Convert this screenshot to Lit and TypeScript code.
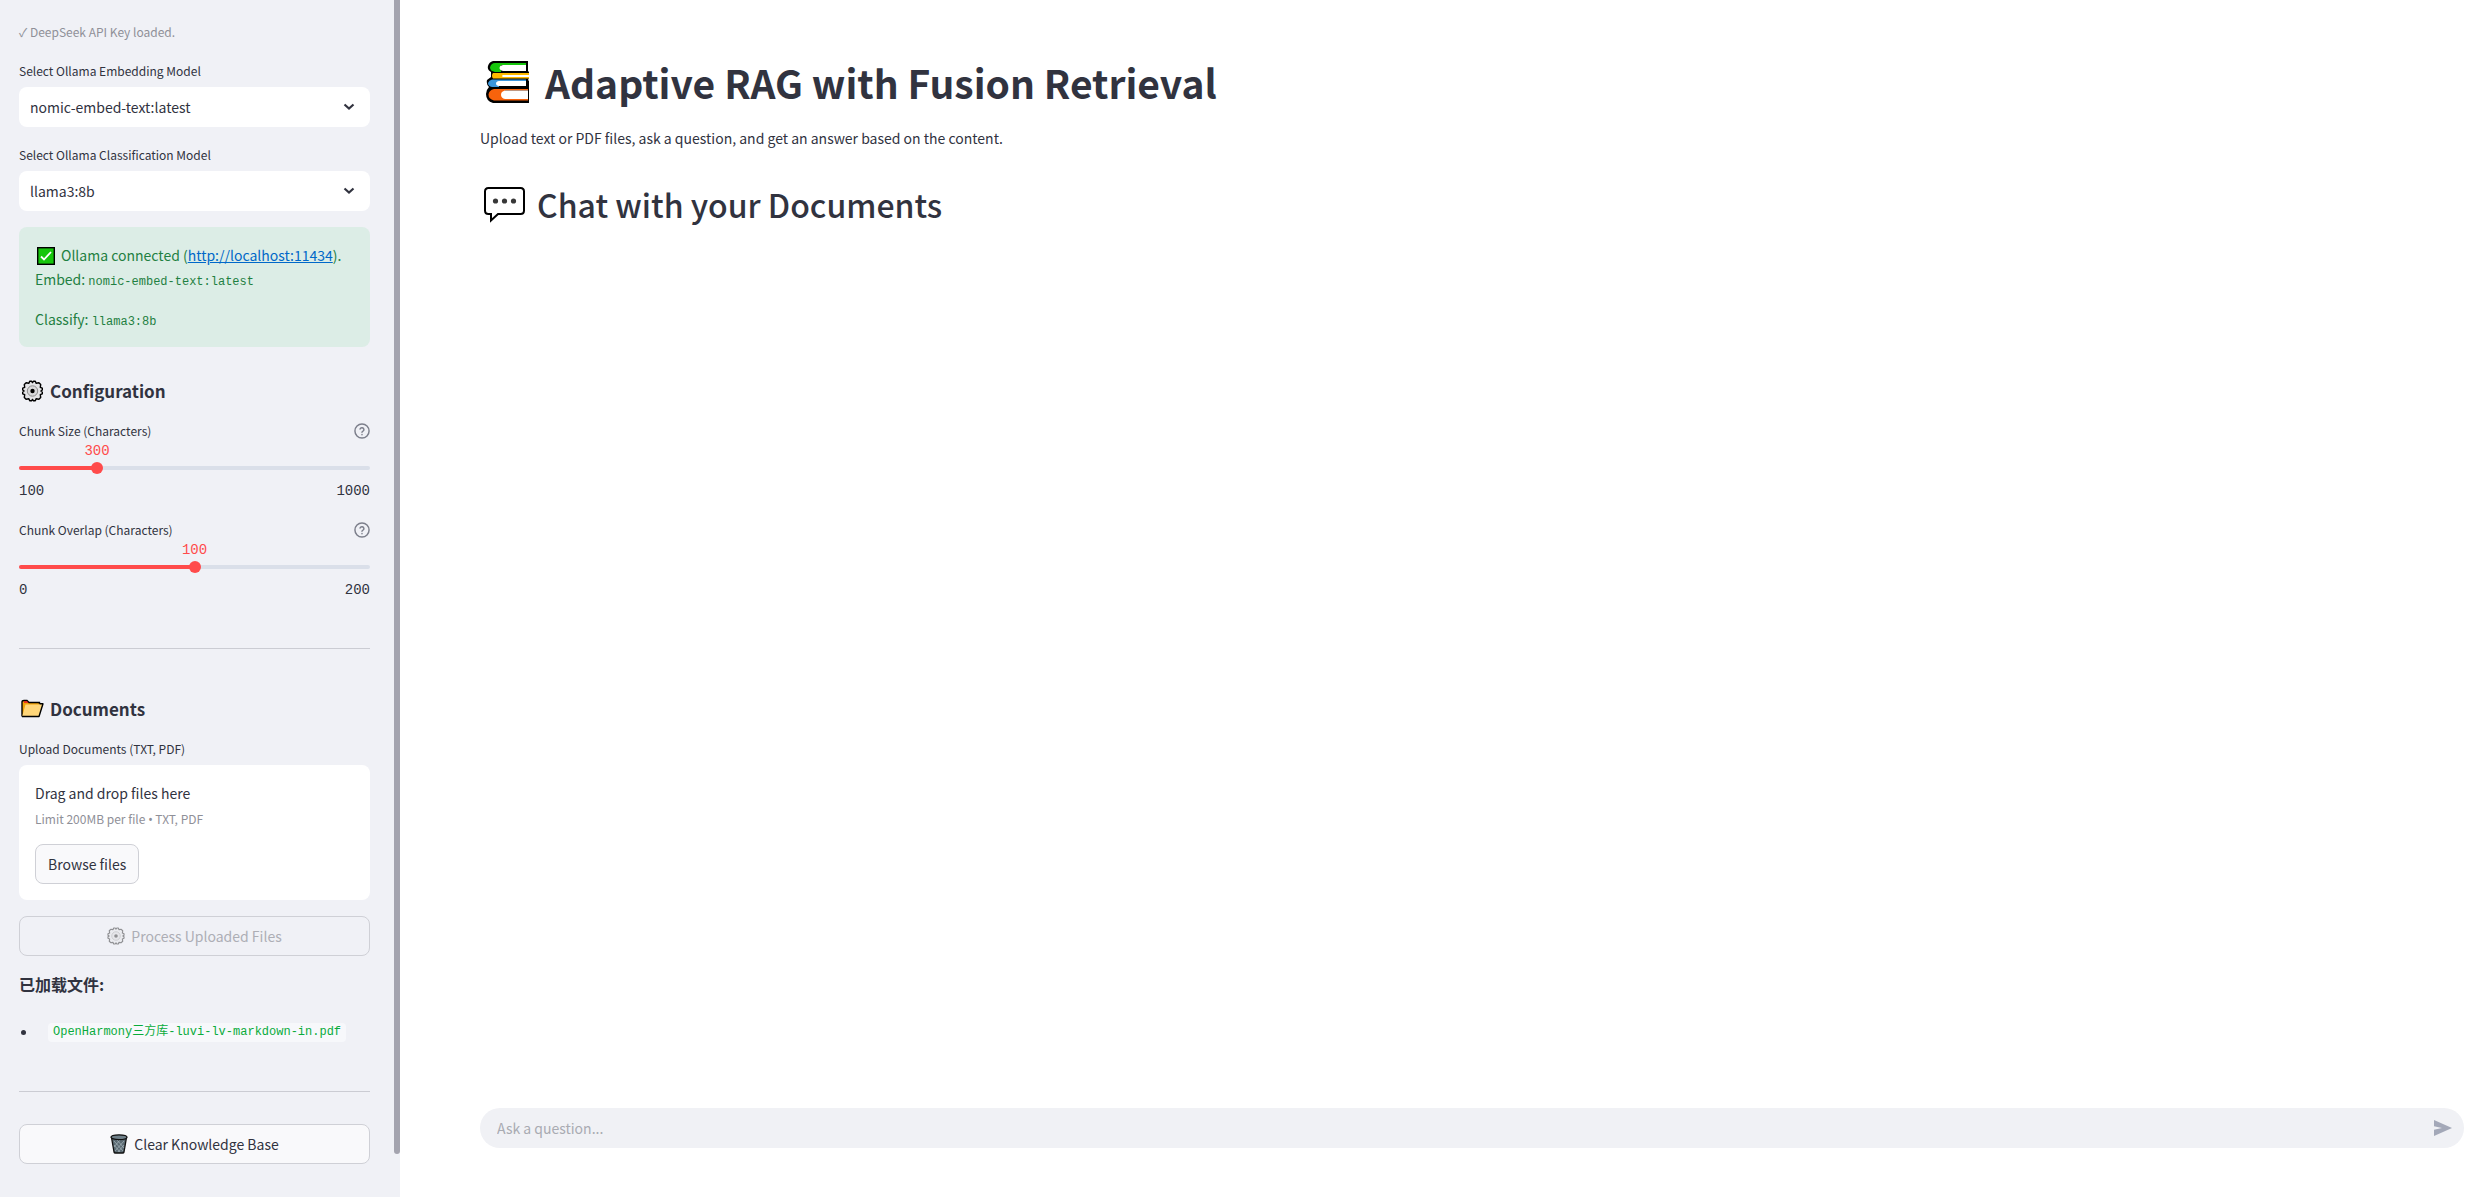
import { LitElement, html, css, svg } from "lit";
import { customElement, property, state } from "lit/decorators.js";

const gear = svg`
  <svg class="gear" viewBox="0 0 22 22" aria-hidden="true">
    <path d="M8.2 1.2 L10 1.2 L11 2.6 L12 1.2 L13.8 1.2 L14.6 3.2 L17.4 2.8 L19.2 4.6 L18.8 7.4 L20.8 8.2 L20.8 10 L19.4 11 L20.8 12 L20.8 13.8 L18.8 14.6 L19.2 17.4 L17.4 19.2 L14.6 18.8 L13.8 20.8 L12 20.8 L11 19.4 L10 20.8 L8.2 20.8 L7.4 18.8 L4.6 19.2 L2.8 17.4 L3.2 14.6 L1.2 13.8 L1.2 12 L2.6 11 L1.2 10 L1.2 8.2 L3.2 7.4 L2.8 4.6 L4.6 2.8 L7.4 3.2 Z"
      fill="#e3e3e6" stroke="#000" stroke-width="1.4" stroke-linejoin="round"/>
    <circle cx="11" cy="11" r="5.2" fill="#d8d8da" stroke="#8d8d8d" stroke-width="1"/>
    <circle cx="11" cy="11" r="2.2" fill="#000"/>
  </svg>`;

@customElement("value-slider")
export class ValueSlider extends LitElement {
  @property() label = "";
  @property({ type: Number }) min = 0;
  @property({ type: Number }) max = 100;
  @property({ type: Number }) value = 0;

  static styles = css`
    :host { display: block; }
    .head { display: flex; align-items: center; justify-content: space-between; height: 24px; }
    label { font-size: 12px; line-height: 24px; }
    .help { border: 0; padding: 0; background: none; width: 16px; height: 16px; color: #7c7f8b; }
    .help svg { display: block; width: 16px; height: 16px; }
    .bubble-row { display: flex; height: 19px; line-height: 17px; }
    .bubble { width: 0; display: flex; justify-content: center; color: #ff4b4b; }
    .bubble-row, .ticks { font-family: "Liberation Mono", monospace; font-size: 14px; }
    .rail { display: grid; align-items: center; height: 12px; }
    .rail > * { grid-area: 1 / 1; }
    .track { height: 4px; border-radius: 2px; background: #dadfe9; overflow: hidden; }
    .fill { height: 4px; background: #ff4b4b; }
    input { appearance: none; background: transparent; margin: 0 -6px; height: 12px; padding: 0; }
    input::-webkit-slider-thumb { appearance: none; width: 12px; height: 12px; border-radius: 50%; background: #ff4b4b; }
    .ticks { display: flex; justify-content: space-between; line-height: 22px; margin-top: 6px; }
  `;

  private onInput(e: Event) {
    this.value = Number((e.target as HTMLInputElement).value);
  }

  render() {
    const pct = ((this.value - this.min) / (this.max - this.min)) * 100;
    return html`
      <div class="head">
        <label for="range">${this.label}</label>
        <button class="help" type="button" aria-label="Help">
          <svg viewBox="0 0 24 24" fill="none" stroke="currentColor" stroke-width="2.2" stroke-linecap="round" stroke-linejoin="round">
            <circle cx="12" cy="12" r="10.6"/><path d="M9.1 9a3 3 0 0 1 5.8 1c0 2-2.9 2.6-2.9 4M12 17.4v.1"/>
          </svg>
        </button>
      </div>
      <div class="bubble-row"><div style="width:${pct}%"></div><div class="bubble">${this.value}</div></div>
      <div class="rail">
        <div class="track"><div class="fill" style="width:${pct}%"></div></div>
        <input id="range" type="range" min=${this.min} max=${this.max} .value=${String(this.value)} @input=${this.onInput} />
      </div>
      <div class="ticks"><span>${this.min}</span><span>${this.max}</span></div>
    `;
  }
}

@customElement("app-root")
export class AppRoot extends LitElement {
  @state() private question = "";

  static styles = css`
    :host {
      display: block;
      color: #31333f;
      font-family: "Noto Sans CJK SC", "Noto Sans", sans-serif;
      font-size: 14px;
      line-height: 24px;
    }
    * { box-sizing: border-box; }
    h1, h2, h3, p, ul { margin: 0; padding: 0; }
    button, select, input { font: inherit; color: inherit; }
    .app { display: grid; grid-template-columns: 400px minmax(0, 1fr); min-height: 100vh; background: #fff; }
    .sidebar { display: grid; grid-template-columns: minmax(0, 1fr) 6px; background: #f0f1f6; }
    .scroll-thumb { height: 96.4%; background: #a4a4af; border-radius: 0 0 3px 3px; }
    .panel { display: flex; flex-direction: column; gap: 16px; padding: 21px 24px 24px 19px; }
    .caption { font-size: 12px; line-height: 22px; color: #8f9098; }
    .field { display: flex; flex-direction: column; gap: 4px; }
    .label { font-size: 12px; line-height: 24px; }
    .select { display: grid; align-items: center; }
    .select > * { grid-area: 1 / 1; }
    select { appearance: none; width: 100%; height: 40px; border: 0; border-radius: 8px; background: #fff; padding: 0 40px 0 11px; }
    .chevron { justify-self: end; width: 12px; height: 8px; margin-right: 15px; pointer-events: none; }
    .alert { display: flex; flex-direction: column; gap: 16px; padding: 16px; border-radius: 8px; background: #dcede6; color: #1f8042; }
    .alert a { color: #0068c9; text-decoration: underline; }
    .alert .check { width: 18px; height: 18px; margin: 0 6px 0 2px; vertical-align: -4px; }
    .alert code, .file { font-family: "Liberation Mono", "Noto Sans CJK SC", monospace; font-size: 12px; }
    .alert code { line-height: 12px; }
    h3 { display: flex; align-items: center; gap: 8px; padding-top: 16px; font-size: 17px; line-height: 24px; font-weight: 600; }
    h3 svg { width: 23px; height: 22px; margin-left: 2px; margin-right: -2px; }
    .divider { height: 1px; border: 0; margin: 31px 0 16px; background: #cbccd3; width: 100%; }
    .drop { display: flex; flex-direction: column; align-items: flex-start; padding: 16px; border-radius: 8px; background: #fff; }
    .drop .limit { font-size: 12px; line-height: 20px; margin-top: 4px; color: #8f9098; }
    .dot { font-family: "Noto Sans", sans-serif; line-height: 12px; }
    .btn { display: flex; align-items: center; justify-content: center; gap: 6px; height: 40px; padding: 0 12px; border: 1px solid #cfd0d6; border-radius: 8px; background: #f9f9fb; }
    .btn svg { width: 18px; height: 20px; }
    .drop .btn { margin-top: 15px; }
    .btn:disabled { background: transparent; color: #adaeb5; }
    .btn:disabled svg { opacity: 0.4; }
    .loaded { font-weight: 700; font-size: 16px; }
    .files { list-style: none; margin-top: 8px; }
    .files li { display: flex; align-items: center; gap: 22px; height: 24px; padding-left: 2px; }
    .files li::before { content: ""; width: 5px; height: 5px; border-radius: 50%; background: #31333f; }
    .file { padding: 0 5px; line-height: 19px; border-radius: 4px; background: #f7f8fb; color: #09ab3b; }
    .main { display: flex; flex-direction: column; padding: 54px 12px 49px 80px; }
    h1 { display: flex; align-items: center; gap: 14px; font-size: 39px; line-height: 56px; font-weight: 700; }
    h1 svg { width: 46px; height: 44px; margin-left: 5px; }
    .intro { margin-top: 16px; }
    h2 { display: flex; align-items: center; gap: 12px; margin-top: 32px; font-size: 32px; line-height: 44px; font-weight: 500; }
    h2 svg { width: 41px; height: 37px; margin-left: 4px; }
    .chat { display: flex; align-items: center; height: 40px; margin-top: auto; padding: 0 12px 0 17px; border-radius: 20px; background: #f0f1f5; }
    .chat input { flex: 1; min-width: 0; border: 0; padding: 0; outline: 0; background: none; height: 24px; }
    .chat input::placeholder { color: #a9abb2; opacity: 1; }
    .send { border: 0; padding: 0; background: none; width: 18px; height: 18px; color: #a3a8b8; }
    .send svg { display: block; width: 18px; height: 18px; }
  `;

  private picker(id: string, label: string, value: string) {
    return html`
      <div class="field">
        <label class="label" for=${id}>${label}</label>
        <div class="select">
          <select id=${id}><option>${value}</option></select>
          <svg class="chevron" viewBox="0 0 12 8"><path d="M1.500 1.500L6 5.500L10.500 1.500" fill="none" stroke="#31333f" stroke-width="2.200"/></svg>
        </div>
      </div>`;
  }

  private get books() {
    return svg`
      <svg viewBox="0 0 46 44" aria-hidden="true">
        <path d="M8 1H43V11L44 12V18L43 20L44 21V28H44V43H8Q1 41 1 34Q1 30 4 27Q1 24 2 20L6 17Q6 14 6 12Q2 10 3 6Q4 2 8 1Z" fill="#000"/>
        <path d="M10 3H41V5H16V12H10Q5 11 5 7.500Q6 3 10 3Z" fill="#16c60c"/>
        <path d="M18 5H41V11H18Q14.500 10 14.500 8Q14.500 5.500 18 5Z" fill="#fff"/>
        <path d="M8 13H44V15H18V17H44V18.500H8Q6 15.500 8 13Z" fill="#ffb900"/>
        <path d="M18 15H44V17H18Q16 16 18 15Z" fill="#fff"/>
        <path d="M7 19.500H41V21H14V27H7Q3 26 3 23Q4 20 7 19.500Z" fill="#3a96dd"/>
        <path d="M14 21H41V26H14Q11 25.500 11 23.500Q11 21.500 14 21Z" fill="#fff"/>
        <path d="M9 29H43V30.500H20V39H43V40.500H9Q3.500 39 3.500 34.500Q4 30 9 29Z" fill="#f7630c"/>
        <path d="M20 30.500H43V39H20Q16 38 16 34.700Q16 31.500 20 30.500Z" fill="#fff"/>
      </svg>`;
  }

  render() {
    return html`
      <div class="app">
        <aside class="sidebar">
          <div class="panel">
            <p class="caption">✓ DeepSeek API Key loaded.</p>
            ${this.picker("embed", "Select Ollama Embedding Model", "nomic-embed-text:latest")}
            ${this.picker("classify", "Select Ollama Classification Model", "llama3:8b")}
            <div class="alert" role="status">
              <p><svg class="check" viewBox="0 0 18 18" aria-hidden="true"><rect x=".7" y=".7" width="16.600" height="16.600" fill="#16c60c" stroke="#000" stroke-width="1.400"/><path d="M4 9.500l3 3L14 5" fill="none" stroke="#fff" stroke-width="1.800"/></svg>Ollama connected (<a href="http://localhost:11434">http://localhost:11434</a>).<br />Embed: <code>nomic-embed-text:latest</code></p>
              <p>Classify: <code>llama3:8b</code></p>
            </div>
            <h3>${gear}Configuration</h3>
            <value-slider label="Chunk Size (Characters)" min="100" max="1000" value="300"></value-slider>
            <value-slider label="Chunk Overlap (Characters)" min="0" max="200" value="100"></value-slider>
            <hr class="divider" />
            <h3>
              <svg viewBox="0 0 23 22" aria-hidden="true">
                <path d="M1 18.500V4Q1 2.500 3 2.500H6L8 4.500H18.500V6.500" fill="#f0a30a" stroke="#000" stroke-width="1.400"/>
                <path d="M3 3.200H6L7.500 4.800H3Z" fill="#e81224"/>
                <path d="M1.200 18.500L4.500 6.500H17.500L18.500 5.800H22L18 18.500Z" fill="#ffd679"/>
                <path d="M1 18.500H18L22 5.800H18.500" fill="none" stroke="#000" stroke-width="1.400" stroke-linejoin="round"/>
              </svg>Documents
            </h3>
            <div class="field">
              <span class="label" id="upload">Upload Documents (TXT, PDF)</span>
              <section class="drop" aria-labelledby="upload">
                <p>Drag and drop files here</p>
                <p class="limit">Limit 200MB per file <span class="dot">•</span> TXT, PDF</p>
                <button class="btn" type="button">Browse files</button>
              </section>
            </div>
            <button class="btn" type="button" disabled>${gear}Process Uploaded Files</button>
            <p class="loaded">已加载文件:</p>
            <ul class="files"><li><code class="file">OpenHarmony三方库-luvi-lv-markdown-in.pdf</code></li></ul>
            <hr class="divider" />
            <button class="btn" type="button">
              <svg viewBox="0 0 18 20" aria-hidden="true">
                <path d="M1.500 3.500L4 18Q4.200 19 5.500 19H12.500Q13.800 19 14 18L16.500 3.500Z" fill="#5b6a72" stroke="#111" stroke-width="1.300"/>
                <path d="M4 7l9 10M7 6l7 8M4 11l6 7M14 7L5 17M10 6l-6 7M14 11l-6 7" stroke="#a9b7bf" stroke-width=".7"/>
                <ellipse cx="9" cy="3.200" rx="8" ry="2.400" fill="#6f8089" stroke="#111" stroke-width="1.200"/>
              </svg>Clear Knowledge Base
            </button>
          </div>
          <div class="scroll-thumb"></div>
        </aside>
        <main class="main">
          <h1>${this.books}Adaptive RAG with Fusion Retrieval</h1>
          <p class="intro">Upload text or PDF files, ask a question, and get an answer based on the content.</p>
          <h2>
            <svg viewBox="0 0 41 37" aria-hidden="true">
              <path d="M4.500 2H36.500Q40 2 40 5.500V24.500Q40 28 36.500 28H14L7 34.500V28H4.500Q1 28 1 24.500V5.500Q1 2 4.500 2Z" fill="#fff" stroke="#000" stroke-width="2"/>
              <circle cx="11.500" cy="15" r="2.600" fill="#383838"/><circle cx="20.500" cy="15" r="2.600" fill="#383838"/><circle cx="29.500" cy="15" r="2.600" fill="#383838"/>
            </svg>Chat with your Documents
          </h2>
          <form class="chat" @submit=${(e: Event) => e.preventDefault()}>
            <input type="text" aria-label="Ask a question" placeholder="Ask a question..." .value=${this.question}
              @input=${(e: Event) => (this.question = (e.target as HTMLInputElement).value)} />
            <button class="send" type="submit" aria-label="Send">
              <svg viewBox="0 0 18 18"><path d="M0 1L18 9L0 17V10.800L8 9L0 7.200Z" fill="currentColor"/></svg>
            </button>
          </form>
        </main>
      </div>`;
  }
}
